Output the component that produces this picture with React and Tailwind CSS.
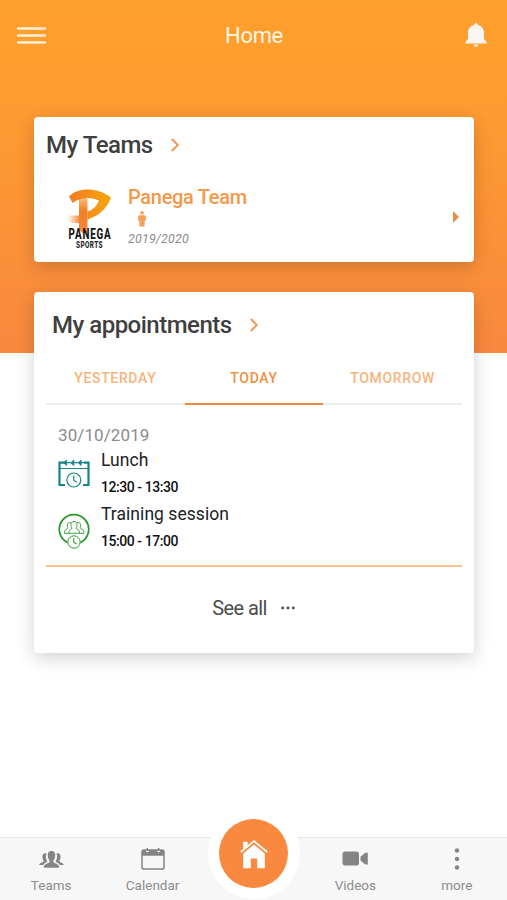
import React from 'react';

const MenuIcon = () => (
  <svg width="30" height="18" viewBox="0 0 30 18" stroke="#fff0dc" strokeWidth="2.300" strokeLinecap="round">
    <path d="M1 2.500h27M1 9.500h27M1 16.500h27" />
  </svg>
);

const BellIcon = () => (
  <svg width="22" height="26" viewBox="0 0 22 26" fill="#f8f6f4">
    <path d="M11 1c-1.100 0-1.800.8-1.800 1.900C5.500 3.800 3 6.700 3 10.600v6.200L.4 20.300v1.200h21.200v-1.200L19 16.800v-6.200c0-3.900-2.500-6.800-6.200-7.700C12.800 1.800 12.100 1 11 1z" />
    <path d="M8.500 22.500h5c-.3 1.500-1.300 2.300-2.500 2.300s-2.200-.8-2.500-2.300z" />
  </svg>
);

const ChevronIcon = () => (
  <svg width="9" height="14" viewBox="0 0 9 14" fill="none" stroke="#f5924a" strokeWidth="1.800">
    <path d="M.8 1l6 6-6 6" />
  </svg>
);

const TeamLogo = () => (
  <svg width="48" height="62" viewBox="0 0 48 62" className="overflow-visible">
    <defs>
      <linearGradient id="logo-bowl" x1="0" y1="0" x2="1" y2="0">
        <stop offset="0" stopColor="#f27c22" />
        <stop offset="0.5" stopColor="#f5901a" />
        <stop offset="1" stopColor="#f6a70a" />
      </linearGradient>
      <linearGradient id="logo-stem" x1="0" y1="0" x2="0" y2="1">
        <stop offset="0" stopColor="#fbbd7a" />
        <stop offset="0.35" stopColor="#f17f26" />
        <stop offset="1" stopColor="#f28a3a" />
      </linearGradient>
      <linearGradient id="logo-dash" x1="0" y1="0" x2="1" y2="0">
        <stop offset="0" stopColor="#f7a35c" stopOpacity="0" />
        <stop offset="1" stopColor="#f28433" />
      </linearGradient>
    </defs>
    <path d="M13 12h8.500v36l-3-3-2 2-3.500-3z" fill="url(#logo-stem)" />
    <path d="M1 29.500h13V37H4v-2.500H1z" fill="url(#logo-dash)" />
    <path
      d="M3 10.500C11 1.500 31 .5 45 11.500c-3 9-11 18-23.500 22v-8C27.500 23.500 31 19.500 33 14.500 25 10.500 14 11 6.500 17z"
      fill="url(#logo-bowl)"
    />
    <g fontFamily="Roboto, sans-serif" fontWeight="800">
      <text transform="translate(2.500 53.200) scale(0.680 1)" fontSize="14.500" letterSpacing="1.250" fill="#141414">PANEGA</text>
      <text transform="translate(10 61.600) scale(0.740 1)" fontSize="8.700" letterSpacing="0.550" fill="#222">SPORTS</text>
    </g>
  </svg>
);

const PersonIcon = () => (
  <svg width="8" height="16" viewBox="0 0 8 16" fill="#f5a05a">
    <circle cx="4" cy="1.900" r="1.800" />
    <path d="M1.600 4.200h4.800c.9 0 1.500.6 1.500 1.400v4.200H6.600V15.500H1.400V9.800H.1V5.600c0-.8.6-1.400 1.500-1.400z" />
  </svg>
);

const LunchIcon = () => (
  <svg width="32" height="30" viewBox="0 0 32 30" className="mt-0.5" fill="none" stroke="#188489">
    <path d="M7 3.700H1.500V26H7M25 26h5.500V3.700H26" strokeWidth="2.200" />
    <path d="M2 9.500h28" strokeWidth="1" />
    <path d="M5 3.700h21" strokeWidth="1.200" />
    <path d="M8.500 1v5.500L5.500 3.700zM15.800 1v5.500l-3-2.800zM23.200 1v5.500l-3-2.800z" fill="#188489" strokeWidth="0.800" />
    <circle cx="15.800" cy="21" r="7" fill="#fff" strokeWidth="1.200" />
    <path d="M15.800 16.500v5l3.200 1.700" strokeWidth="1.200" />
  </svg>
);

const TrainingIcon = () => (
  <svg width="32" height="36" viewBox="0 0 32 36" className="mt-2" fill="none" stroke="#27992b">
    <path d="M9.500 29.500A14.700 14.700 0 1 1 22.500 29.500" strokeWidth="1.700" />
    <g strokeWidth="0.900">
      <path d="M11 18.300c0-1.500 2.700-1.700 3-3.200-1.700-1.700-1.700-6.600 2-6.600s3.700 4.900 2 6.600c.3 1.500 3.500 1.700 3.500 3.200v2H11z" />
      <path d="M13 9.800c-2.500-1-4.500 1-3.300 4.800.3 1.700-3.200 1.700-3.200 4v1.700H11M19 9.800c2.500-1 4.500 1 3.300 4.800-.3 1.700 3.700 1.700 3.700 4v1.700h-4.500" />
    </g>
    <circle cx="16" cy="29" r="6.200" strokeWidth="1" />
    <path d="M15.800 25v4.300l2.800 1.700" strokeWidth="1.100" />
  </svg>
);

const TeamsIcon = () => (
  <svg width="25" height="17" viewBox="0 0 26 17" preserveAspectRatio="none" className="mt-0.5" fill="#858585">
    <path d="M7.800 2.600C5.300 1.500 3 3.300 3.600 6.800c.2 1.500.9 2.500 1.200 3.200.2 1.600-4.300 1.400-4.600 4h4.300c.7-2.100 3.300-2.300 4.300-3.200C7.600 9.300 6.500 6 7.800 2.600z" />
    <path d="M18.200 2.600c2.500-1.100 4.800.7 4.200 4.200-.2 1.500-.9 2.500-1.200 3.200-.2 1.600 4.300 1.400 4.600 4h-4.300c-.7-2.100-3.300-2.300-4.300-3.200 1.200-1.500 2.300-4.800 1-8.200z" />
    <path d="M13 0C9.700 0 8.800 2.500 9.200 5.300c.2 2 1 3.500 1.800 4.400.8 3-5.500 2-6 6.200 0 .4.300.8.700.8h14.600c.4 0 .7-.4.700-.8-.5-4.200-6.800-3.200-6-6.200.8-.9 1.600-2.400 1.800-4.400C17.200 2.500 16.300 0 13 0z" />
  </svg>
);

const CalendarIcon = () => (
  <svg width="24" height="22" viewBox="0 0 24 22" fill="none">
    <rect x="1" y="2" width="22" height="19" rx="1.800" stroke="#858585" strokeWidth="1.500" />
    <path d="M1 2h3.600v.6a1.700 1.700 0 0 0 3.400 0V2h8v.6a1.700 1.700 0 0 0 3.400 0V2H23v5.800H1z" fill="#858585" />
    <path d="M6.300 0v3M17.700 0v3" stroke="#858585" strokeWidth="1.400" />
  </svg>
);

const VideoIcon = () => (
  <svg width="26" height="15" viewBox="0 0 26 15" fill="#858585">
    <rect x="0.500" y=".5" width="16.500" height="14" rx="2.800" />
    <path d="M18.500 5.700l4.800-3.900h2.500v11.800h-2.500l-4.800-4z" />
  </svg>
);

const MoreIcon = () => (
  <svg width="6" height="24" viewBox="0 0 6 24" fill="#858585">
    <circle cx="3" cy="3.500" r="2.200" />
    <circle cx="3" cy="12" r="2.200" />
    <circle cx="3" cy="20.500" r="2.200" />
  </svg>
);

const HomeIcon = () => (
  <svg width="28" height="29" viewBox="0 0 28 29" fill="#fff">
    <path d="M3.200 1.800h4.300v4.500l-4.300 3.800z" />
    <path d="M.8 12L14 1.200 27.200 12" fill="none" stroke="#fff" strokeWidth="1.700" />
    <path d="M14 4.600L3.200 13.400V28.300h7.600v-9.800h6.400v9.800h7.600V13.400z" />
  </svg>
);

const tabs = [
  { label: 'YESTERDAY', active: false },
  { label: 'TODAY', active: true },
  { label: 'TOMORROW', active: false },
];

const appointments = [
  { title: 'Lunch', time: '12:30 - 13:30', icon: LunchIcon },
  { title: 'Training session', time: '15:00 - 17:00', icon: TrainingIcon },
];

const Header = () => (
  <header className="grid h-[70px] grid-cols-3 items-center px-[17px]">
    <div>
      <MenuIcon />
    </div>
    <h1 className="pl-px text-center text-[22px] tracking-[-0.3px] text-[#fff7e6]">Home</h1>
    <div className="flex justify-end pr-[3px]">
      <BellIcon />
    </div>
  </header>
);

const TeamsCard = () => (
  <section className="h-[145px] rounded bg-white pt-3 shadow-[0_5px_18px_rgba(0,0,0,0.18)]">
    <div className="flex items-center gap-[18px] pl-3">
      <h2 className="text-[24px] leading-8 font-medium tracking-[-0.5px] text-[#3f3f3f]">My Teams</h2>
      <ChevronIcon />
    </div>
    <div className="flex pt-[25px] pr-[15px] pl-8">
      <TeamLogo />
      <div className="ml-[14px] flex-1">
        <div className="text-[20px] leading-[23px] font-medium tracking-[-0.3px] text-[#f59849]">Panega Team</div>
        <div className="flex h-[18px] items-center pt-px pl-2.5">
          <PersonIcon />
        </div>
        <div className="text-[12.500px] leading-[23px] tracking-[0.15px] text-[#8c8c8c] italic">2019/2020</div>
      </div>
      <svg width="6" height="12" viewBox="0 0 6 12" className="mt-[25px]" fill="#f08b43">
        <path d="M0 0l6 6-6 6z" />
      </svg>
    </div>
  </section>
);

const AppointmentsCard = () => (
  <section className="mt-[30px] h-[361px] rounded bg-white px-3 pt-[17px] shadow-[0_5px_18px_rgba(0,0,0,0.18)]">
    <div className="flex items-center gap-[18px] pl-1.5">
      <h2 className="text-[24px] leading-8 font-medium tracking-[-0.5px] text-[#3f3f3f]">My appointments</h2>
      <ChevronIcon />
    </div>
    <div className="mt-[11px] grid grid-cols-3">
      {tabs.map((tab) => (
        <div
          key={tab.label}
          className={`flex h-[53px] items-center justify-center border-b-2 pt-px text-[14px] font-medium tracking-[0.65px] ${
            tab.active ? 'border-[#ef8443] text-[#ed913f]' : 'border-[#ececec] text-[#f6b47c]'
          }`}
        >
          {tab.label}
        </div>
      ))}
    </div>
    <div className="h-[162px] border-b-2 border-[#f8c58e] px-3 pt-[19px]">
      <div className="text-[17px] leading-[22px] tracking-[0.1px] text-[#8b8b8b]">30/10/2019</div>
      {appointments.map(({ title, time, icon: Icon }) => (
        <div key={title} className="flex h-[54px] gap-[11px]">
          <div className="flex w-8 items-center justify-center">
            <Icon />
          </div>
          <div>
            <div className="text-[17.500px] leading-[29px] tracking-[0.05px] text-[#222]">{title}</div>
            <div className="text-[14px] leading-[25px] font-medium tracking-[-0.45px] text-[#111]">{time}</div>
          </div>
        </div>
      ))}
    </div>
    <div className="flex items-center justify-center gap-3.5 pt-[27px] pr-px text-[#4c4c4c]">
      <span className="text-[20px] leading-7 tracking-[-0.6px]">See all</span>
      <svg width="14" height="4" viewBox="0 0 14 4" fill="currentColor">
        <circle cx="1.700" cy="2" r="1.400" />
        <circle cx="7" cy="2" r="1.400" />
        <circle cx="12.300" cy="2" r="1.400" />
      </svg>
    </div>
  </section>
);

const NavItem = ({ label, children }) => (
  <div className="flex flex-col items-center pl-px text-[13.500px] text-[#8c8c8c]">
    <div className="flex h-[38px] items-center pt-[3px]">{children}</div>
    <span className="leading-[19px]">{label}</span>
  </div>
);

const BottomNav = () => (
  <nav className="mt-auto grid h-[63px] grid-cols-5 border-t border-[#e6e6e6] bg-[#f7f7f7]">
    <NavItem label="Teams"><TeamsIcon /></NavItem>
    <NavItem label="Calendar"><CalendarIcon /></NavItem>
    <div className="relative">
      <div className="absolute -top-[31px] left-[calc(50%+0.5px)] flex size-[92px] -translate-x-1/2 items-center justify-center rounded-full bg-white">
        <div className="flex size-[69px] items-center justify-center rounded-full bg-[#f8893e] pt-0.5">
          <HomeIcon />
        </div>
      </div>
    </div>
    <NavItem label="Videos"><VideoIcon /></NavItem>
    <NavItem label="more"><MoreIcon /></NavItem>
  </nav>
);

export default function App() {
  return (
    <div className="flex h-[900px] w-[507px] flex-col overflow-hidden bg-white bg-[linear-gradient(#ff9f2d_0,#ff9e2e_70px,#f8883f_353px)] bg-[length:100%_353px] bg-no-repeat font-[Roboto,sans-serif]">
      <Header />
      <main className="pt-[47px] pr-[33px] pl-[34px]">
        <TeamsCard />
        <AppointmentsCard />
      </main>
      <BottomNav />
    </div>
  );
}
